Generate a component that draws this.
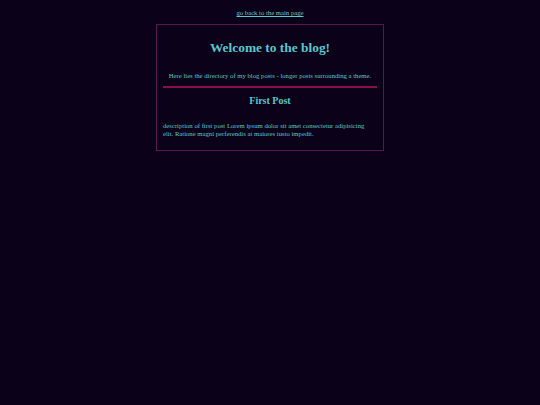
export default function App() {
  return (
    <div className="min-h-screen bg-[#0b0118] pt-[9px] text-[#58c8ce]" style={{ fontFamily: '"Liberation Serif", "Times New Roman", serif' }}>
      <div className="text-center text-[6.7px] leading-[8px]">
        <a href="#" className="underline text-[#60c6ce]">go back to the main page</a>
      </div>
      <div className="mx-auto mt-[7px] w-[228px] border border-[#5a1848] px-[6px] pb-[13px]">
        <h1 className="mt-[15px] text-center text-[13.4px] font-bold leading-[15px]">Welcome to the blog!</h1>
        <p className="mt-[16.5px] text-center text-[6.7px] leading-[8px]">Here lies the directory of my blog posts - longer posts surrounding a theme.</p>
        <div className="mt-[6.5px] h-[2px] bg-[#8a1045]" />
        <h2 className="mt-[7px] text-center text-[10px] font-bold leading-[12px]">First Post</h2>
        <p className="mt-[15px] pr-[6px] text-[6.7px] leading-[7.5px]">description of first post Lorem ipsum dolor sit amet consectetur adipisicing elit. Ratione magni perferendis at maiores iusto impedit.</p>
      </div>
    </div>
  );
}
